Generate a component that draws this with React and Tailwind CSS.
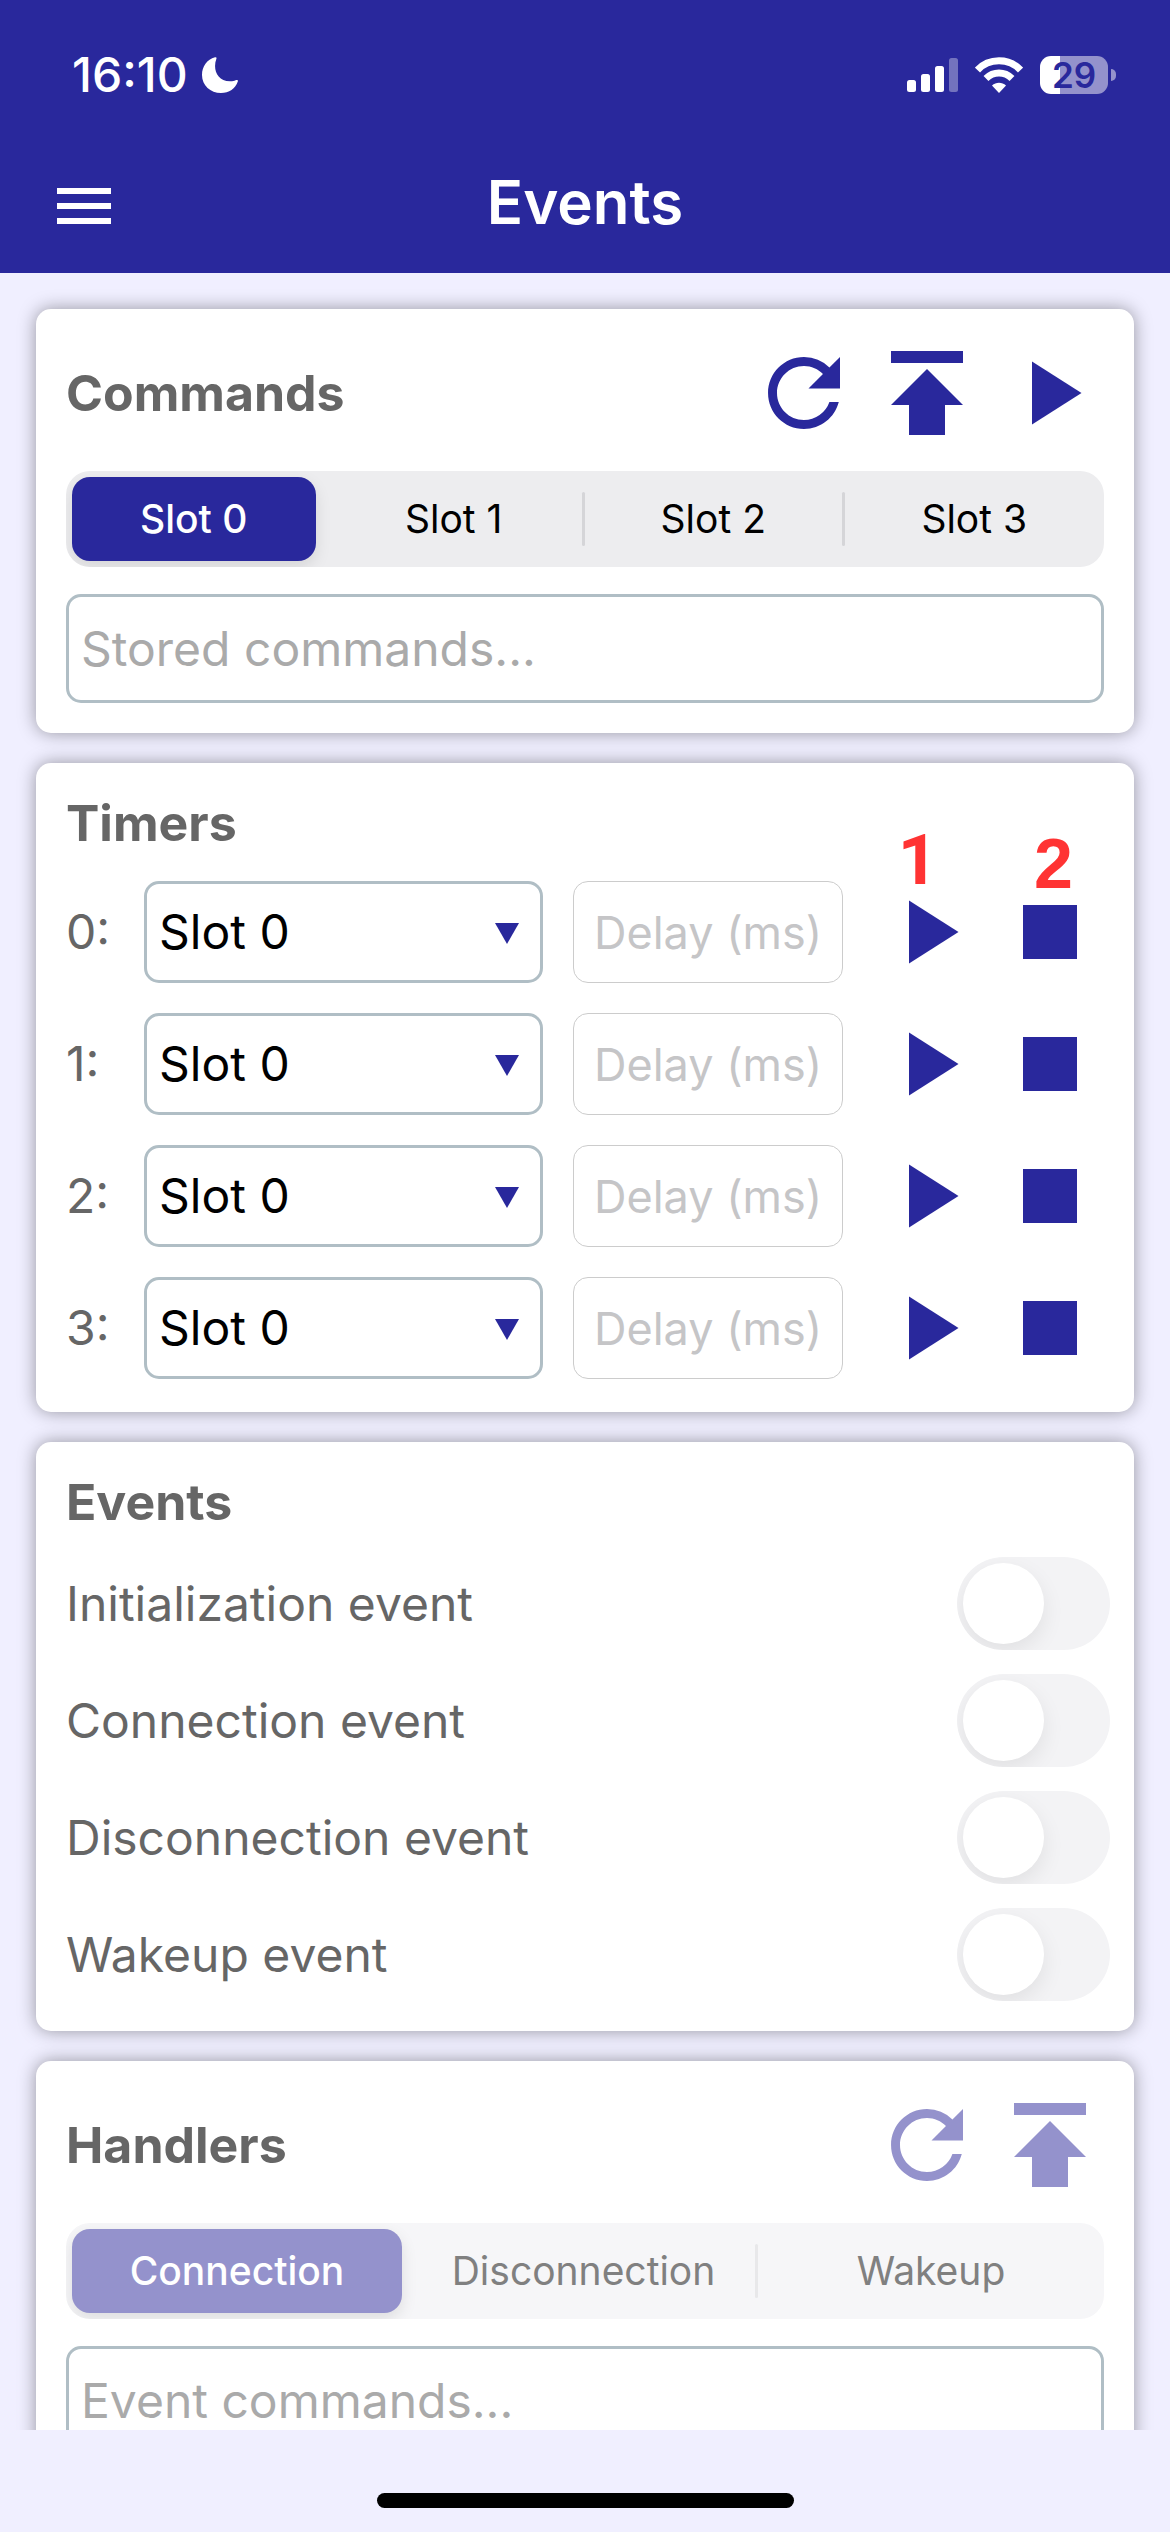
import { useState } from 'react';
import clsx from 'clsx';

const SLOTS = ['Slot 0', 'Slot 1', 'Slot 2', 'Slot 3'];
const HANDLERS = ['Connection', 'Disconnection', 'Wakeup'];
const EVENTS = ['Initialization event', 'Connection event', 'Disconnection event', 'Wakeup event'];

function RefreshIcon() {
  return (
    <svg className="size-[108px]" viewBox="0 0 24 24" fill="currentColor">
      <path d="M17.65 6.35A7.958 7.958 0 0 0 12 4c-4.42 0-7.99 3.58-7.99 8s3.57 8 7.99 8c3.73 0 6.84-2.55 7.73-6h-2.08A5.99 5.99 0 0 1 12 18c-3.31 0-6-2.69-6-6s2.69-6 6-6c1.66 0 3.14.69 4.22 1.78L13 11h7V4l-2.35 2.35z" />
    </svg>
  );
}

function PublishIcon() {
  return (
    <svg className="size-[108px]" viewBox="0 0 108 108" fill="currentColor">
      <path d="M18 12h72v12H18zM54 30l36 36H72v30H36V66H18z" />
    </svg>
  );
}

function PlayIcon() {
  return (
    <svg className="size-[108px]" viewBox="0 0 24 24" fill="currentColor">
      <path d="M8 5v14l11-7z" />
    </svg>
  );
}

function StopIcon() {
  return (
    <svg className="size-[108px]" viewBox="0 0 24 24" fill="currentColor">
      <path d="M6 6h12v12H6z" />
    </svg>
  );
}

function IconButton({ label, disabled, children }) {
  return (
    <button
      type="button"
      aria-label={label}
      disabled={disabled}
      className="flex w-[108px] shrink-0 items-center justify-center text-[#29289c] disabled:text-[#9492cc]"
    >
      {children}
    </button>
  );
}

function StatusBar() {
  return (
    <div className="flex h-[150px] items-center justify-between pr-[54px] pl-[72px] text-white">
      <div className="flex items-center gap-3.5">
        <span className="text-[48px] leading-[56px] font-medium">16:10</span>
        <svg className="h-9 w-9" viewBox="0 0 36 36" fill="currentColor">
          <path d="M13 .3C14.200 0 14.900.6 14.400 1.700C10.500 12 15 25.500 30 24.200C32 24 33.200 23.300 34.500 23C35.600 22.800 36.200 23.500 35.800 24.500C33.500 31.500 27 36 19 36C8.500 36 0 28.500 0 18C0 9.500 5 2.500 13 .3z" />
        </svg>
      </div>
      <div className="flex items-center gap-[17px]">
        <svg className="h-9 w-[51px]" viewBox="0 0 51 36" fill="currentColor">
          <rect x="0" y="23" width="9" height="12" rx="2.500" />
          <rect x="14" y="17" width="9" height="18" rx="2.500" />
          <rect x="28" y="9" width="9" height="26" rx="2.500" />
          <rect x="42" y="1" width="9" height="34" rx="2.500" opacity=".35" />
        </svg>
        <svg className="h-9 w-12" viewBox="0 0 48 36" fill="none" stroke="currentColor" strokeWidth="7">
          <path d="M2.500 13C14 .8 34 .8 45.500 13" />
          <path d="M11 21.500C18.500 14.200 29.500 14.200 37 21.500" />
          <path d="M24 36l-7-7.600c4-3.600 10-3.600 14 0z" fill="currentColor" stroke="none" />
        </svg>
        <div className="flex items-center gap-[3px]">
          <div className="flex h-[38px] w-[68px] items-center justify-center rounded-[11px] bg-linear-to-r from-white from-30% to-[#9492cc] to-30% text-[35px] leading-none font-semibold text-[#29289c]">
            29
          </div>
          <div className="h-3 w-[5px] rounded-r-full bg-[#9492cc]" />
        </div>
      </div>
    </div>
  );
}

function Card({ className, children }) {
  return (
    <section
      className={clsx('shrink-0 rounded-[15px] bg-white p-[30px] shadow-[0_0_18px_rgba(0,0,0,0.38)]', className)}
    >
      {children}
    </section>
  );
}

function CardTitle({ children }) {
  return <h2 className="text-[50px] leading-[60px] font-bold text-[#666]">{children}</h2>;
}

function CardHeader({ title, children }) {
  return (
    <div className="mb-6 flex h-[108px] items-center justify-between">
      <CardTitle>{title}</CardTitle>
      <div className="flex gap-[15px]">{children}</div>
    </div>
  );
}

function Segmented({ items, value, onChange, disabled }) {
  const selected = items.indexOf(value);
  return (
    <div
      className={clsx(
        'grid h-24 auto-cols-fr grid-flow-col overflow-hidden rounded-3xl',
        disabled ? 'bg-[#f6f6f8]' : 'bg-[#ededef]'
      )}
    >
      {items.map((item, i) => (
        <div key={item} className={clsx('flex min-w-0 items-center py-1.5', i === selected && 'pr-2.5 pl-1.5')}>
          <button
            type="button"
            disabled={disabled}
            aria-pressed={i === selected}
            onClick={() => onChange(item)}
            className={clsx(
              'h-full flex-1 rounded-[18px] text-center text-[39px]',
              i === selected && 'font-medium text-white shadow-[0_6px_16px_rgba(0,0,0,0.1)]',
              i === selected && (disabled ? 'bg-[#9492cc]' : 'bg-[#29289c]'),
              i !== selected && (disabled ? 'text-[#808080]' : 'text-black')
            )}
          >
            {item}
          </button>
          {i !== selected && i < items.length - 1 && (
            <span className={clsx('h-[54px] w-[3px] rounded-full', disabled ? 'bg-[#e8e8ea]' : 'bg-[#d5d5d8]')} />
          )}
        </div>
      ))}
    </div>
  );
}

function CommandInput({ label }) {
  return (
    <input
      type="text"
      aria-label={label}
      placeholder={`${label}...`}
      className="mt-[27px] block h-[109px] w-full rounded-[15px] border-3 border-[#b0bec5] px-3 text-[48px] placeholder:text-[#aaa]"
    />
  );
}

function TimerRow({ index }) {
  return (
    <div className="grid grid-cols-[48px_minmax(0,399fr)_minmax(0,270fr)_231px] grid-rows-[102px] items-center gap-x-[30px]">
      <label htmlFor={`timer-${index}`} className="text-[48px] leading-[60px] text-[#666]">
        {index}:
      </label>
      <div className="relative h-full">
        <select
          id={`timer-${index}`}
          className="size-full appearance-none rounded-[15px] border-3 border-[#b0bec5] bg-white px-3 text-[48px] text-black"
        >
          {SLOTS.map(slot => <option key={slot}>{slot}</option>)}
        </select>
        <svg className="pointer-events-none absolute top-[42px] right-6 h-[21px] w-6" viewBox="0 0 24 21" fill="#29289c">
          <path d="M0 0h24L12 21z" />
        </svg>
      </div>
      <input
        type="text"
        inputMode="numeric"
        aria-label={`Timer ${index} delay`}
        placeholder="Delay (ms)"
        className="size-full rounded-[15px] border border-[#ccc] bg-white px-5 text-[45px] placeholder:text-[#c5c5c7]"
      />
      <div className="flex gap-[15px]">
        <IconButton label={`Start timer ${index}`}><PlayIcon /></IconButton>
        <IconButton label={`Stop timer ${index}`}><StopIcon /></IconButton>
      </div>
    </div>
  );
}

function EventSwitch({ label }) {
  return (
    <label className="-mr-1.5 flex h-[93px] items-center justify-between">
      <span className="text-[48px] leading-[60px] text-[#666]">{label}</span>
      <span className="relative flex h-[93px] w-[153px] overflow-hidden rounded-full bg-[#f3f3f5] p-1.5">
        <input type="checkbox" role="switch" className="peer sr-only" />
        <span className="size-[81px] rounded-full bg-white shadow-[0_8px_22px_rgba(0,0,0,0.08)] peer-checked:translate-x-[60px]" />
      </span>
    </label>
  );
}

export default function App() {
  const [slot, setSlot] = useState('Slot 0');
  const [handler, setHandler] = useState('Connection');

  return (
    <div className="flex h-screen flex-col bg-[#f0efff] font-[Inter,Roboto,sans-serif]">
      <header className="h-[273px] shrink-0 bg-[#29289c]">
        <StatusBar />
        <div className="grid grid-cols-[1fr_auto_1fr] items-center px-[57px] text-white">
          <button type="button" aria-label="Menu" className="flex w-[54px] flex-col gap-[9px] pt-2">
            <span className="h-1.5 bg-white" />
            <span className="h-1.5 bg-white" />
            <span className="h-1.5 bg-white" />
          </button>
          <h1 className="text-[60px] leading-[104px] font-semibold">Events</h1>
        </div>
      </header>

      <main className="flex min-h-0 flex-1 flex-col gap-[30px] overflow-y-auto px-9 pt-9 [scrollbar-width:none]">
        <Card>
          <CardHeader title="Commands">
            <IconButton label="Reload"><RefreshIcon /></IconButton>
            <IconButton label="Upload"><PublishIcon /></IconButton>
            <IconButton label="Run"><PlayIcon /></IconButton>
          </CardHeader>
          <Segmented items={SLOTS} value={slot} onChange={setSlot} />
          <CommandInput label="Stored commands" />
        </Card>

        <Card className="relative pb-[33px]">
          <CardTitle>Timers</CardTitle>
          <div className="mt-7 flex flex-col gap-[30px]">
            {[0, 1, 2, 3].map(i => <TimerRow key={i} index={i} />)}
          </div>
          <span className="absolute top-[62px] right-[196px] font-[Roboto,Arial,sans-serif] text-[70px] leading-[70px] font-bold text-[#ff3333]">1</span>
          <span className="absolute top-[66px] right-[61px] font-['Liberation_Sans',Arial,sans-serif] text-[70px] leading-[70px] font-bold text-[#ff3333]">2</span>
        </Card>

        <Card>
          <CardTitle>Events</CardTitle>
          <div className="mt-[25px] flex flex-col gap-6">
            {EVENTS.map(name => <EventSwitch key={name} label={name} />)}
          </div>
        </Card>

        <Card>
          <CardHeader title="Handlers">
            <IconButton label="Reload handlers" disabled><RefreshIcon /></IconButton>
            <IconButton label="Upload handlers" disabled><PublishIcon /></IconButton>
          </CardHeader>
          <Segmented items={HANDLERS} value={handler} onChange={setHandler} disabled />
          <CommandInput label="Event commands" />
        </Card>
      </main>

      <footer className="flex h-[102px] shrink-0 justify-center pt-[63px]">
        <div className="h-[15px] w-[417px] rounded-full bg-black" />
      </footer>
    </div>
  );
}
